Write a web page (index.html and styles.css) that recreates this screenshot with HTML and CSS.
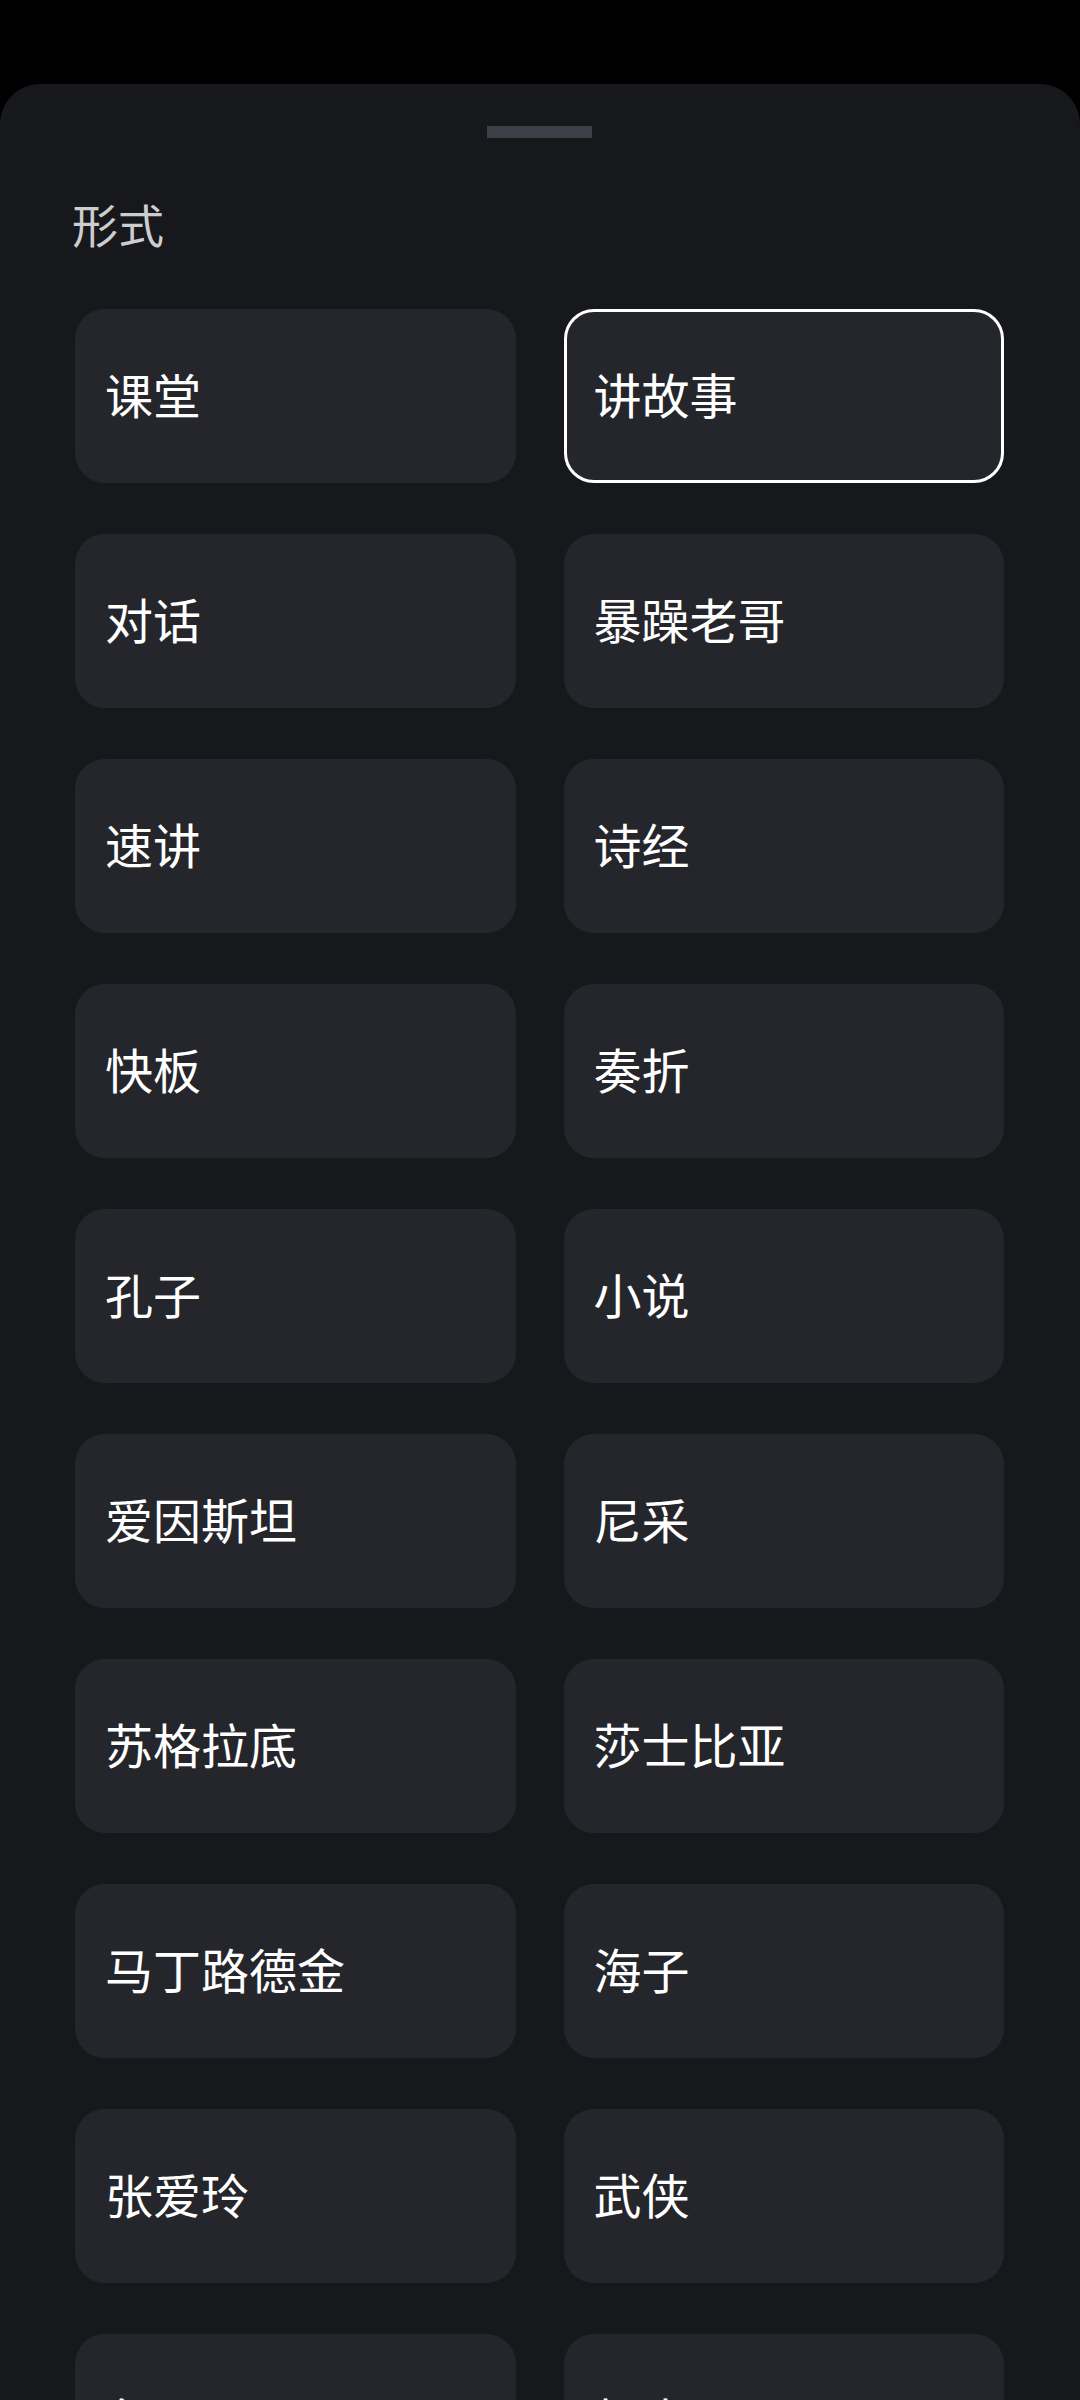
FILE: index.html
```html
<!DOCTYPE html>
<html lang="zh-CN">

<head>
    <meta charset="UTF-8">
    <meta name="viewport" content="width=device-width, initial-scale=1.0">
    <title>形式</title>
    <link rel="stylesheet" href="styles.css">
</head>

<body>
    <div class="sheet">
        <div class="handle"></div>
        <h2 class="title">形式</h2>
        <div class="options">
            <div class="option">课堂</div>
            <div class="option selected">讲故事</div>
            <div class="option">对话</div>
            <div class="option">暴躁老哥</div>
            <div class="option">速讲</div>
            <div class="option">诗经</div>
            <div class="option">快板</div>
            <div class="option">奏折</div>
            <div class="option">孔子</div>
            <div class="option">小说</div>
            <div class="option">爱因斯坦</div>
            <div class="option">尼采</div>
            <div class="option">苏格拉底</div>
            <div class="option">莎士比亚</div>
            <div class="option">马丁路德金</div>
            <div class="option">海子</div>
            <div class="option">张爱玲</div>
            <div class="option">武侠</div>
            <div class="option">鲁迅</div>
            <div class="option">相声</div>
        </div>
    </div>
</body>

</html>
```

FILE: styles.css
```css
html, body {
    margin: 0;
    padding: 0;
    background: #000;
}
body {
    height: 2400px;
    overflow: hidden;
    padding-top: 84px;
    box-sizing: border-box;
    font-family: "Noto Sans CJK SC", "Noto Sans", sans-serif;
}
.sheet {
    background: #17181c;
    border-radius: 40px 40px 0 0;
    padding: 42px 76px 0 75px;
    height: 2316px;
    box-sizing: border-box;
}
.handle {
    width: 105px;
    height: 12px;
    margin: 0 auto;
    background: #3d3e48;
}
.title {
    margin: 62px 0 0 -3px;
    font-size: 46px;
    line-height: 46px;
    font-weight: normal;
    color: #cdcdcf;
}
.options {
    display: grid;
    grid-template-columns: 1fr 1fr;
    column-gap: 48px;
    row-gap: 51px;
    margin-top: 63px;
}
.option {
    height: 174px;
    box-sizing: border-box;
    background: #25262b;
    border-radius: 30px;
    padding: 0 30px 6px;
    display: flex;
    align-items: center;
    font-size: 48px;
    color: #fff;
}
.option.selected {
    border: 3px solid #fff;
    padding: 0 27px 6px;
}
```
